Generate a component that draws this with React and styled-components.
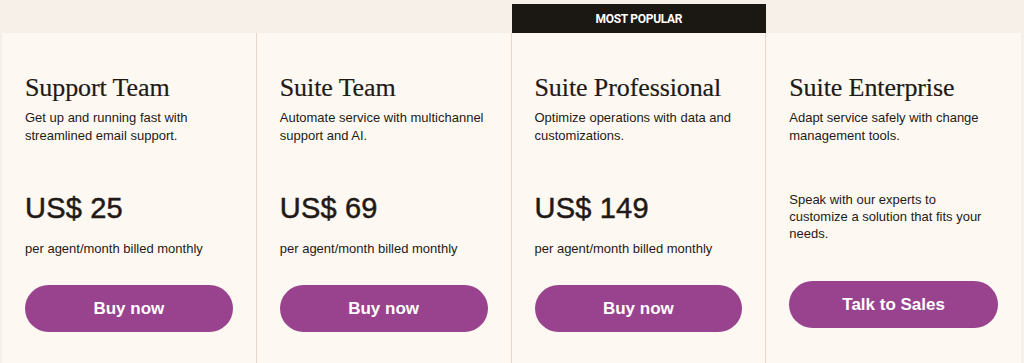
import styled, { createGlobalStyle } from 'styled-components'

const GlobalStyle = createGlobalStyle`
    body {
        margin: 0;
        background-color: #f7f0e8;
        font-family: "Liberation Sans", Arial, sans-serif;
        color: #1f1a16;
    }
`

const Page = styled.div`
    width: 1024px;
    height: 363px;
    overflow: hidden;
    padding: 4px 3px 0 2px;
    box-sizing: border-box;
`

const Grid = styled.div`
    display: grid;
    grid-template-columns: repeat(4, 1fr);
    align-items: end;
`

const Column = styled.div`
    display: flex;
    flex-direction: column;
`

const Badge = styled.div`
    height: 29px;
    display: flex;
    align-items: center;
    justify-content: center;
    background-color: #1b1712;
    color: #ffffff;
    font-family: "Roboto", "Liberation Sans", sans-serif;
    font-weight: 700;
    font-size: 12px;
    letter-spacing: -0.3px;
    text-transform: uppercase;
`

const Card = styled.div`
    height: 330px;
    box-sizing: border-box;
    padding: 40px 23px 0 23px;
    background-color: #fdf9f2;
    border-right: ${({ $last }) => ($last ? 'none' : '1px solid #e4d9cc')};
    display: flex;
    flex-direction: column;
`

const Title = styled.h2`
    margin: 0;
    font-family: "Liberation Serif", "Times New Roman", serif;
    font-weight: 400;
    font-size: 26px;
    line-height: 30px;
    letter-spacing: -0.1px;
    -webkit-text-stroke: 0.2px #1f1a16;
`

const Description = styled.p`
    margin: 6px 0 0;
    min-height: 36px;
    font-size: 13px;
    line-height: 17.5px;
`

const Price = styled.div`
    margin-top: 45px;
    font-size: 29px;
    line-height: 36px;
    font-weight: 400;
    -webkit-text-stroke: 0.5px #1f1a16;
    letter-spacing: 0.2px;
`

const Billing = styled.p`
    margin: 14px 0 0;
    font-size: 13px;
    line-height: 18px;
`

const Note = styled.p`
    margin: 46px 0 0;
    font-size: 13px;
    line-height: 17px;
`

const Action = styled.button`
    margin-top: ${({ $gap }) => $gap}px;
    width: 100%;
    height: 47px;
    border: none;
    border-radius: 24px;
    background-color: #99438f;
    color: #ffffff;
    font-family: "Liberation Sans", Arial, sans-serif;
    font-weight: 700;
    font-size: 17px;
    cursor: pointer;
`

const plans = [
    {
        name: 'Support Team',
        text: 'Get up and running fast with streamlined email support.',
        price: 'US$ 25',
    },
    {
        name: 'Suite Team',
        text: 'Automate service with multichannel support and AI.',
        price: 'US$ 69',
    },
    {
        name: 'Suite Professional',
        text: 'Optimize operations with data and customizations.',
        price: 'US$ 149',
        popular: true,
    },
    {
        name: 'Suite Enterprise',
        text: 'Adapt service safely with change management tools.',
        note: 'Speak with our experts to customize a solution that fits your needs.',
    },
]

const App = () => {
    return <>
        <GlobalStyle />
        <Page>
            <Grid>
                {plans.map((plan, i) => (
                    <Column key={plan.name}>
                        {plan.popular && <Badge>Most Popular</Badge>}
                        <Card $last={i === plans.length - 1}>
                            <Title>{plan.name}</Title>
                            <Description>{plan.text}</Description>
                            {plan.price ? <>
                                <Price>{plan.price}</Price>
                                <Billing>per agent/month billed monthly</Billing>
                                <Action $gap={27}>Buy now</Action>
                            </> : <>
                                <Note>{plan.note}</Note>
                                <Action $gap={39}>Talk to Sales</Action>
                            </>}
                        </Card>
                    </Column>
                ))}
            </Grid>
        </Page>
    </>
}

export default App
